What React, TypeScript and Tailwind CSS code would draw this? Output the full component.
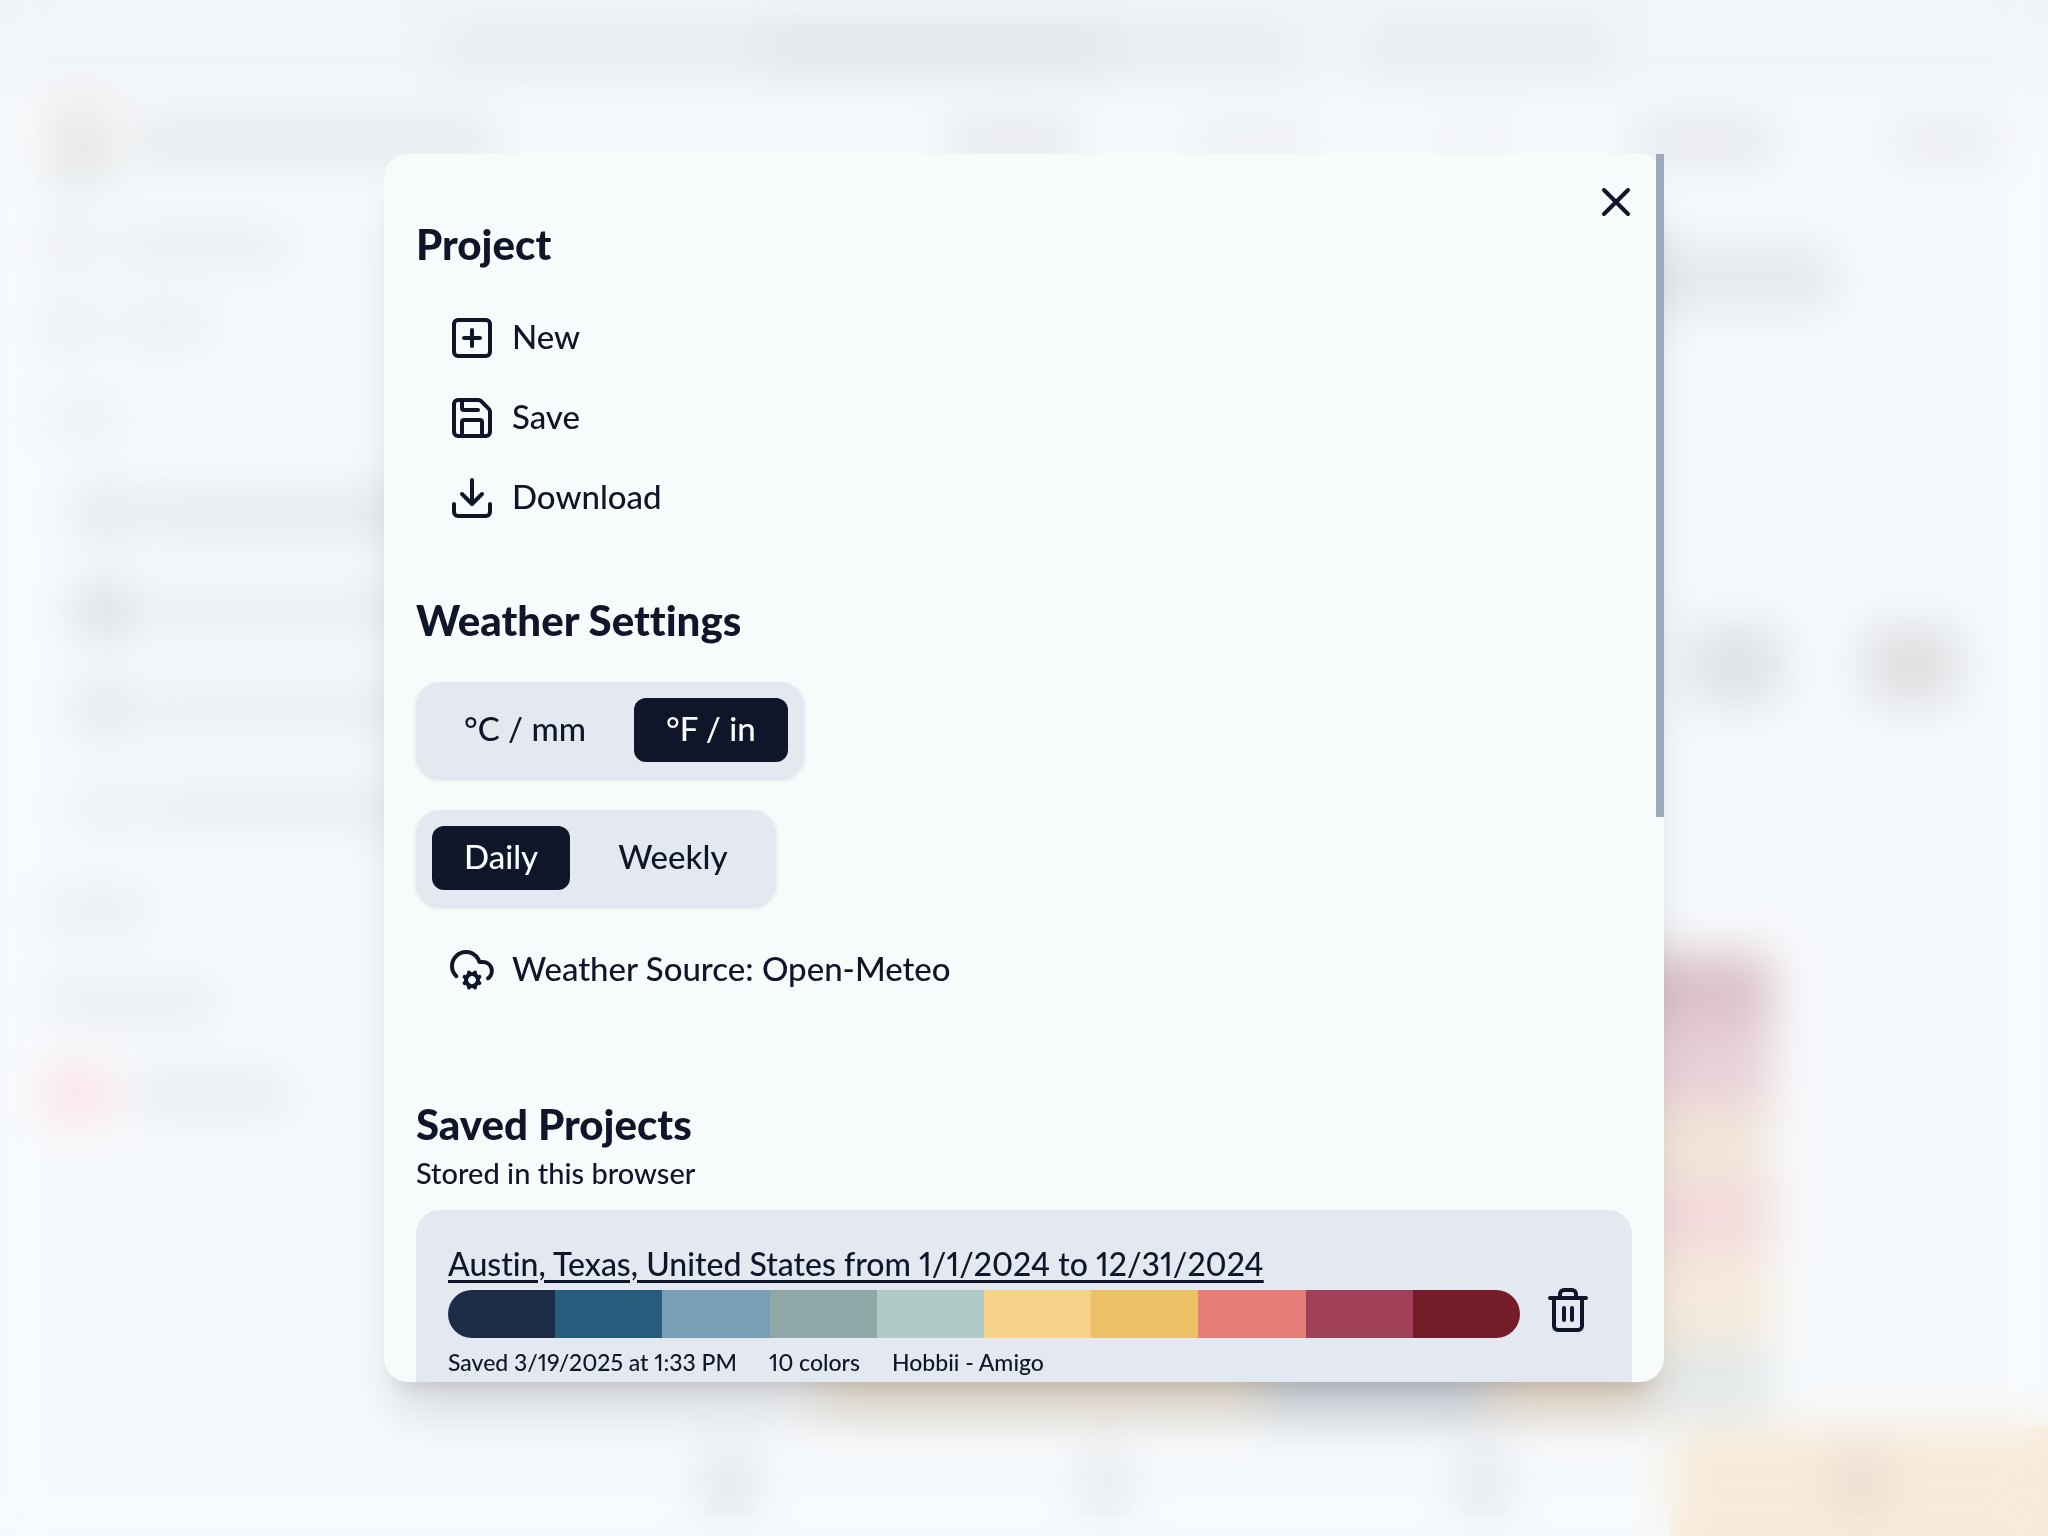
import React, { useState } from "react";
import { CloudCog, Download, Save, SquarePlus, Trash2, X } from "lucide-react";

const swatches = [
  "bg-[#1c2c46]",
  "bg-[#275d7c]",
  "bg-[#799eb8]",
  "bg-[#8fa8a8]",
  "bg-[#b0cac5]",
  "bg-[#f4d389]",
  "bg-[#ecc065]",
  "bg-[#e67d79]",
  "bg-[#a04159]",
  "bg-[#741d29]",
];

function Heading({ children }: { children: React.ReactNode }) {
  return <h2 className="pb-1 text-[42px] leading-[52px] font-black">{children}</h2>;
}

function ActionButton({ icon, children }: { icon: React.ReactNode; children: React.ReactNode }) {
  return (
    <button type="button" className="flex items-center gap-4 px-8 py-4 text-left">
      {icon}
      <span className="pb-1 leading-[44px]">{children}</span>
    </button>
  );
}

function Segmented({ label, name, options, initial }: { label: string; name: string; options: string[]; initial: string }) {
  const [value, setValue] = useState(initial);
  return (
    <div
      role="radiogroup"
      aria-label={label}
      className="flex w-fit gap-4 rounded-3xl bg-[#e4e8f0] p-4 shadow-[0_2px_4px_rgba(0,0,0,0.12)]"
    >
      {options.map((option) => (
        <label
          key={option}
          className="flex h-16 cursor-pointer items-center rounded-xl px-8 pb-1 has-checked:bg-[#101629] has-checked:text-[#f7fbfb]"
        >
          <input
            type="radio"
            name={name}
            value={option}
            checked={value === option}
            onChange={() => setValue(option)}
            className="size-0 appearance-none"
          />
          {option}
        </label>
      ))}
    </div>
  );
}

function SideRow({ icon, text, indent }: { icon?: string; text: string; indent?: boolean }) {
  return (
    <div className={indent ? "flex h-[98px] items-center gap-4 pl-20" : "flex h-[92px] items-center gap-7 pl-12"}>
      {icon && <div className={icon} />}
      <div className={text} />
    </div>
  );
}

function Backdrop() {
  return (
    <div aria-hidden="true" className="flex h-screen flex-col overflow-hidden bg-[#f7fafd]">
      <div className="flex h-24 shrink-0 items-center justify-center gap-16 bg-[#f1f5fa]">
        <div className="flex h-12 w-[864px] bg-[#e8ecf0] pl-[320px]">
          <div className="w-[360px] bg-[#e1e4e9]" />
        </div>
        <div className="h-12 w-[244px] bg-[#e6ebef]" />
      </div>
      <div className="flex h-[100px] shrink-0 items-center px-12 pb-2">
        <div className="h-20 w-16 bg-linear-to-b from-[#f8ece4] to-[#d8e0e2]" />
        <div className="ml-6 h-9 w-[360px] bg-[#e0e3e7]" />
        <div className="ml-auto flex h-10 w-[1052px] items-center justify-between">
          <div className="h-9 w-32 bg-[#e1e3e7]" />
          <div className="h-8 w-32 bg-[#ebedf0]" />
          <div className="h-8 w-24 bg-[#f0f2f5]" />
          <div className="h-9 w-36 bg-[#e1e3e7]" />
          <div className="h-8 w-28 bg-[#e6e8eb]" />
        </div>
      </div>
      <div className="flex min-h-0 flex-1">
        <div className="w-[540px] shrink-0 pt-1">
          <SideRow icon="h-10 w-10 bg-[#e6e8eb]" text="h-8 w-44 bg-[#e6e9ed]" />
          <div className="-mt-3">
            <SideRow icon="h-10 w-10 bg-[#e4e7eb]" text="h-8 w-24 bg-[#e7eaee]" />
          </div>
          <SideRow text="h-8 w-[76px] bg-[#eaecef]" />
          <div className="mb-2">
            <SideRow indent icon="h-12 w-12 bg-[#dae2e6]" text="h-11 w-80 bg-[#e2e8ec]" />
            <SideRow indent icon="h-12 w-12 bg-[#d0d6d9]" text="h-9 w-80 bg-[#e8ebee]" />
            <SideRow indent icon="h-12 w-12 bg-[#dde1e3]" text="h-9 w-80 bg-[#e8ebee]" />
            <SideRow indent icon="h-10 w-12 bg-[#e8ebee]" text="h-9 w-80 bg-[#e8ebee]" />
          </div>
          <SideRow text="h-9 w-[100px] bg-[#e8ebee]" />
          <SideRow text="h-9 w-[170px] bg-[#e8ebee]" />
          <SideRow icon="h-12 w-14 bg-[#ffdbe0]" text="h-9 w-40 bg-[#e6e9ec]" />
        </div>
        <div className="flex flex-1 flex-col">
          <div className="flex h-[164px] items-center justify-end pr-[212px]">
            <div className="h-[68px] w-72 bg-[#e5e9ec]" />
          </div>
          <div className="mt-[260px] flex h-[90px] items-center justify-end gap-20 pr-[88px]">
            <div className="h-20 w-24 bg-[#dee2e4]" />
            <div className="h-20 w-24 bg-[#dddfe1]" />
          </div>
          <div className="mt-[244px] mr-[276px] ml-[280px] flex flex-1 flex-col">
            <div className="h-[68px] bg-[#dabfc6]" />
            <div className="h-[82px] bg-[#e8d0d8]" />
            <div className="h-20 bg-[#f2e5d9]" />
            <div className="h-[68px] bg-[#f3dadb]" />
            <div className="h-24 bg-[#f5eadb]" />
            <div className="flex h-[68px]">
              <div className="w-[440px] bg-[#f2e8d9]" />
              <div className="w-[230px] bg-[#d5dce4]" />
              <div className="w-[160px] bg-[#f3e4d2]" />
              <div className="flex-1 bg-[#e1e8ea]" />
            </div>
          </div>
          <div className="flex h-[110px] shrink-0">
            <div className="flex flex-1 items-center justify-center"><div className="h-16 w-12 bg-[#dfe3e7]" /></div>
            <div className="flex flex-1 items-center justify-center"><div className="h-16 w-12 bg-[#e6e9ec]" /></div>
            <div className="flex flex-1 items-center justify-center"><div className="h-16 w-12 bg-[#e2e6ea]" /></div>
            <div className="flex flex-1 items-center justify-center bg-[#f8ead8]"><div className="h-16 w-12 bg-[#e8ddd1]" /></div>
          </div>
        </div>
      </div>
    </div>
  );
}

export default function App() {
  return (
    <div className="relative h-screen overflow-hidden bg-[#f6fafd] font-['Lato',sans-serif] text-[33px] leading-[46px] font-medium text-[#101629] proportional-nums [font-variant-ligatures:none]">
      <Backdrop />
      <div className="absolute inset-0 flex items-center justify-center backdrop-blur-xl">
        <div
          role="dialog"
          aria-modal="true"
          aria-label="Project menu"
          className="relative h-[80vh] w-full max-w-7xl rounded-3xl bg-[#f7fbfb] shadow-[0_40px_50px_-10px_rgba(0,0,0,0.13),0_16px_20px_-12px_rgba(0,0,0,0.13)]"
        >
          <div className="h-full overflow-hidden rounded-3xl px-8 pt-16">
            <section>
              <Heading>Project</Heading>
              <div className="mt-4 flex flex-col items-start pt-2">
                <ActionButton icon={<SquarePlus size={48} />}>New</ActionButton>
                <ActionButton icon={<Save size={48} />}>Save</ActionButton>
                <ActionButton icon={<Download size={48} />}>Download</ActionButton>
              </div>
            </section>

            <section className="mt-14">
              <Heading>Weather Settings</Heading>
              <div className="mt-8 flex flex-col items-start gap-8">
                <Segmented label="Units" name="units" options={["°C / mm", "°F / in"]} initial="°F / in" />
                <Segmented label="Grouping" name="grouping" options={["Daily", "Weekly"]} initial="Daily" />
              </div>
              <div className="mt-6">
                <ActionButton icon={<CloudCog size={48} />}>Weather Source: Open-Meteo</ActionButton>
              </div>
            </section>

            <section className="mt-[88px]">
              <Heading>Saved Projects</Heading>
              <p className="pb-0.5 text-[29px] leading-[38px]">Stored in this browser</p>
              <article className="mt-4 flex items-center gap-6 rounded-3xl bg-[#e4e8f0] p-8">
                <div className="min-w-0 flex-1">
                  <a
                    href="#austin"
                    className="block w-fit pb-1 text-[32px] leading-[44px] underline decoration-[3px] underline-offset-4"
                  >
                    Austin, Texas, United States from 1/1/2024 to 12/31/2024
                  </a>
                  <div className="flex h-12 overflow-hidden rounded-full">
                    {swatches.map((color) => (
                      <div key={color} className={`flex-1 ${color}`} />
                    ))}
                  </div>
                  <div className="mt-1 flex gap-8 text-[23px] leading-10">
                    <span>Saved 3/19/2025 at 1:33 PM</span>
                    <span>10 colors</span>
                    <span>Hobbii - Amigo</span>
                  </div>
                </div>
                <button type="button" aria-label="Delete saved project" className="mr-2 pb-1">
                  <Trash2 size={48} />
                </button>
              </article>
            </section>
          </div>
          <button type="button" aria-label="Close" className="absolute top-6 right-6">
            <X size={48} />
          </button>
          <div className="absolute top-0 right-0 h-[54%] w-2 bg-[#9eaab9]" />
        </div>
      </div>
    </div>
  );
}
